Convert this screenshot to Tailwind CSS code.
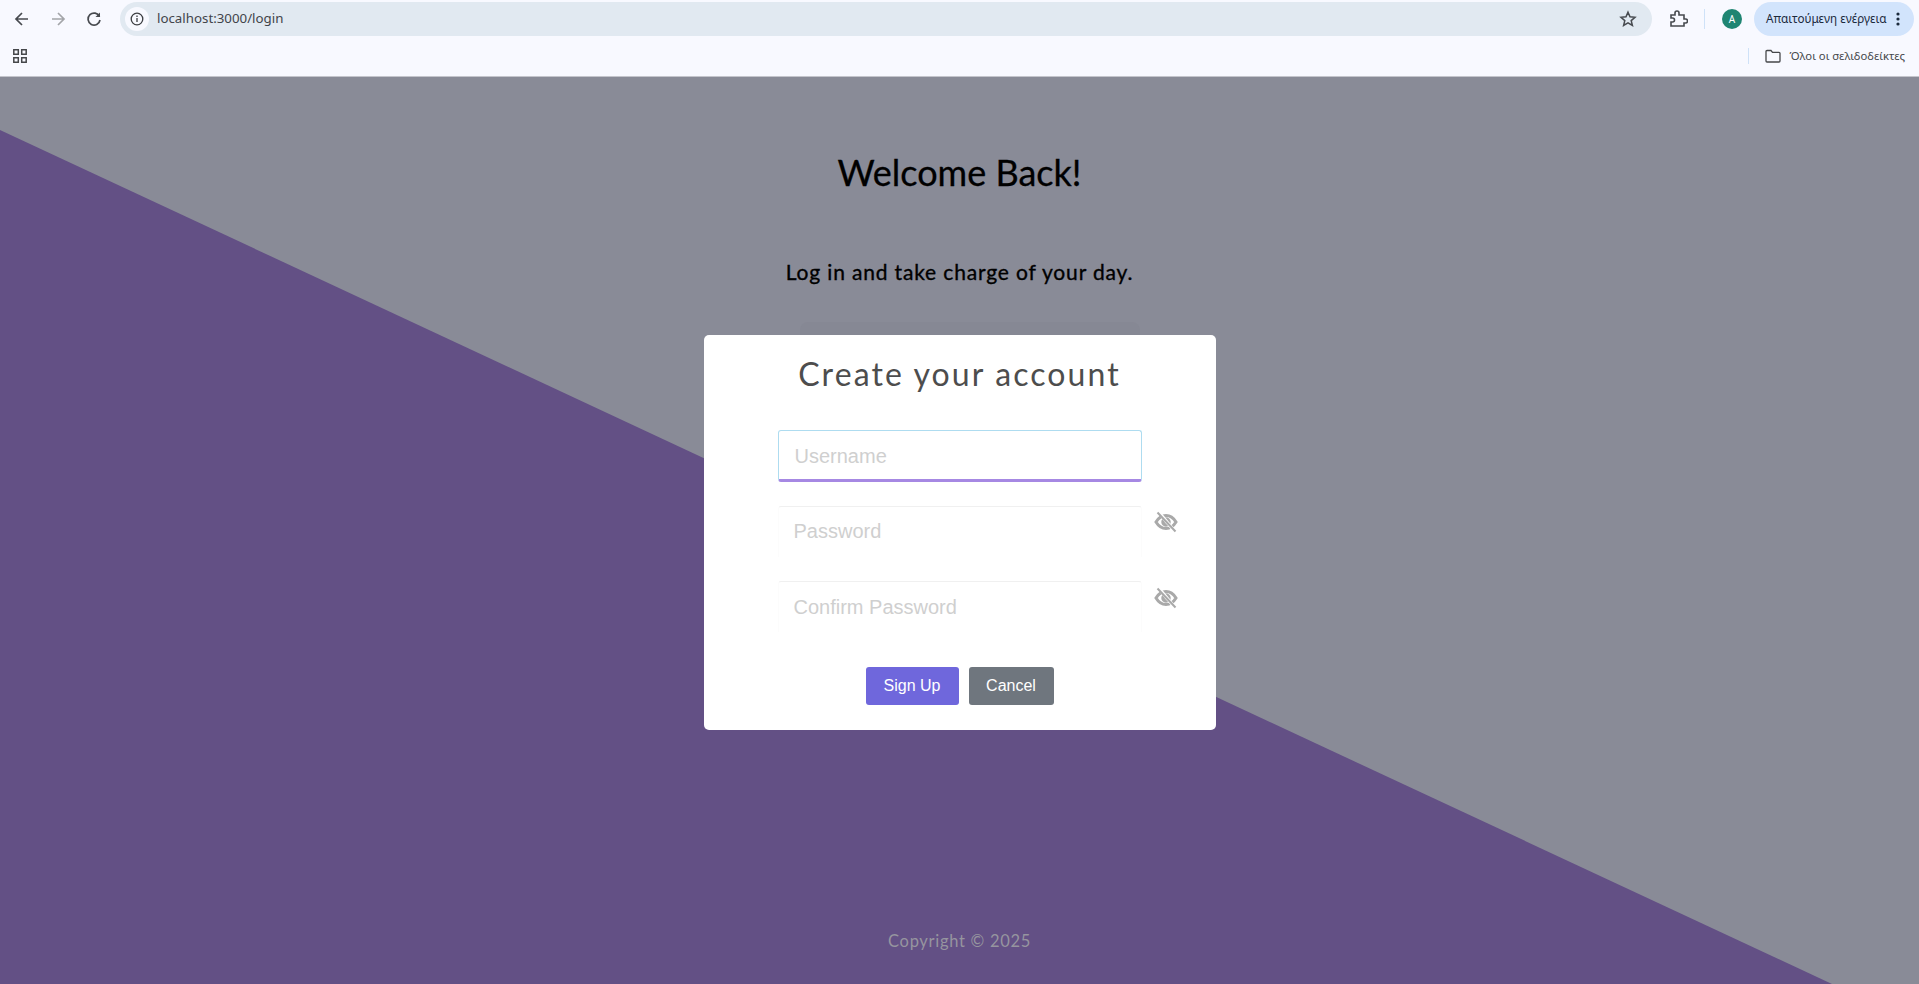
<!DOCTYPE html>
<html>
<head>
<meta charset="utf-8">
<script src="https://cdn.jsdelivr.net/npm/@tailwindcss/browser@4"></script>
</head>
<body class="w-[1919px] h-[984px] overflow-hidden font-['Liberation_Sans',sans-serif]">
<div class="h-[77px] bg-[#f8f9ff] flex flex-col border-b border-[#c4c5cc]">
  <div class="h-[38px] shrink-0 flex items-center pl-[12px] pr-[5px] text-[#45474a]">
    <div class="flex items-center gap-[14px] w-[108px] shrink-0">
      <svg class="w-[20px] h-[20px]" viewBox="0 0 20 20" fill="none" stroke="#474a4f" stroke-width="1.7"><path d="M16 10H4.500M10 4l-6 6 6 6"/></svg>
      <svg class="w-[20px] h-[20px] ml-[2px]" viewBox="0 0 20 20" fill="none" stroke="#a3a5a9" stroke-width="1.7"><path d="M4 10h11.500M10 4l6 6-6 6"/></svg>
      <svg class="w-[20px] h-[20px] ml-[2px]" viewBox="0 0 20 20" fill="none" stroke="#474a4f" stroke-width="1.7"><path d="M15.500 7.500A6 6 0 1 0 16 11"/><path d="M16 3.500V8h-4.500" fill="#474a4f" stroke="none"/></svg>
    </div>
    <div class="w-[1532px] shrink-0 h-[34px] rounded-full bg-[#e1e9f1] flex items-center pl-[5px] pr-[15px]">
      <div class="w-[24px] h-[24px] rounded-full bg-[#f8f9ff] flex items-center justify-center">
        <svg class="w-[14px] h-[14px]" viewBox="0 0 14 14" fill="none" stroke="#3c3e42" stroke-width="1.3"><circle cx="7" cy="7" r="5.800"/><path d="M7 6v4M7 3.500v1.400"/></svg>
      </div>
      <span class="ml-[8px] text-[13.300px] text-[#41444a] font-['Noto_Sans',sans-serif]">localhost:3000/login</span>
      <svg class="w-[18px] h-[18px] ml-auto" viewBox="0 0 18 18" fill="none" stroke="#474a4f" stroke-width="1.5"><path d="M9 2.200l2 4.600 5 .5-3.800 3.300 1.200 4.900L9 12.900l-4.400 2.600 1.200-4.900L2 7.300l5-.5z"/></svg>
    </div>
    <svg class="w-[20px] h-[20px] ml-[16px] shrink-0" viewBox="0 0 20 20" fill="none" stroke="#474a4f" stroke-width="1.6"><path d="M3 6h4V4a2 2 0 0 1 4 0v2h5v4h1.500a2 2 0 0 1 0 4H16v3H3v-4h1.500a2 2 0 0 0 0-4H3z"/></svg>
    <div class="w-px h-[20px] bg-[#cfe2f8] ml-[16px] shrink-0"></div>
    <div class="w-[20px] h-[20px] ml-[17px] shrink-0 rounded-full bg-[#1f8572] text-white text-[10px] flex items-center justify-center font-['Noto_Sans',sans-serif]">A</div>
    <div class="ml-[12px] w-[160px] shrink-0 h-[34px] rounded-full bg-[#d2e4fc] flex items-center pl-[12px] text-[11.700px] text-[#1c2a3c] font-['Noto_Sans',sans-serif]">
      <span class="whitespace-nowrap">Απαιτούμενη ενέργεια</span>
      <svg class="w-[4px] h-[14px] ml-[10px]" viewBox="0 0 4 14" fill="#1c2a3c"><circle cx="2" cy="2" r="1.600"/><circle cx="2" cy="7" r="1.600"/><circle cx="2" cy="12" r="1.600"/></svg>
    </div>
  </div>
  <div class="h-[36px] shrink-0 flex items-center pl-[13px] pr-[14px]">
    <svg class="w-[14px] h-[14px]" viewBox="0 0 14 14" fill="none" stroke="#45474a" stroke-width="1.500"><path d="M.8.8h4.500v4.500H.8zM8.700.8h4.500v4.500H8.700zM.8 8.700h4.500v4.500H.8zM8.700 8.700h4.500v4.500H8.700z"/></svg>
    <div class="w-px h-[16px] bg-[#cfe2f8] ml-auto"></div>
    <svg class="w-[16px] h-[14px] ml-[16px]" viewBox="0 0 16 14" fill="none" stroke="#45474a" stroke-width="1.300"><path d="M1 2.500a1 1 0 0 1 1-1h4l1.500 1.800H14a1 1 0 0 1 1 1V12a1 1 0 0 1-1 1H2a1 1 0 0 1-1-1z"/></svg>
    <span class="ml-[8px] text-[11.300px] text-[#45474a] font-['Noto_Sans',sans-serif] whitespace-nowrap">Όλοι οι σελιδοδείκτες</span>
  </div>
</div>
<main class="relative h-[907px] bg-[#898b97] overflow-hidden flex flex-col items-center">
  <svg class="absolute inset-0 w-[1919px] h-[907px]" viewBox="0 0 1919 907"><polygon points="0,53 1832,907 0,907" fill="#635085"/></svg>
  <h1 class="relative mt-[73px] text-[36px] leading-[44px] text-black font-['Lato',sans-serif] [-webkit-text-stroke:0.3px_black]">Welcome Back!</h1>
  <p class="relative mt-[64px] text-[21px] leading-[28px] text-black font-['Lato',sans-serif] tracking-[0.840px] [-webkit-text-stroke:0.35px_black]">Log in and take charge of your day.</p>
  <div class="relative mt-[49px] w-[512px] h-[395px] bg-white rounded-[5px] flex flex-col items-center">
    <div class="absolute top-[-13px] left-[96px] w-[340px] h-[13px] rounded-t-[8px] bg-[#868894]"></div>
    <h2 class="mt-[19px] text-[32px] leading-[40px] text-[#4d4d4d] font-['Lato',sans-serif] tracking-[2.100px]">Create your account</h2>
    <div class="mt-[36px] w-[364px] h-[52px] rounded-[3px] border border-[#aedcf0] border-b-[3px] border-b-[#a688e3] pl-[16px] pt-[1px] flex items-center text-[20px] text-[#cfcfcf]">Username</div>
    <div class="relative mt-[24px] w-[364px] h-[51px] rounded-t-[3px] border border-b-0 border-x-[#fcfcfc] border-t-[#f0f0f0] pl-[15px] pt-[12px] text-[20px] leading-[24px] text-[#cfcfcf]">Password
      <svg class="absolute right-[-37px] top-[3px] w-[24px] h-[24px]" viewBox="0 0 24 24" fill="none" stroke="#a9a9a9"><path d="M2 12c3-5 6.500-6.500 10-6.500S19 7 22 12c-3 5-6.500 6.500-10 6.500S5 17 2 12z" stroke-width="3"/><circle cx="12" cy="12" r="3" stroke-width="3.500"/><path d="M5 2.500l15 18" stroke="#ffffff" stroke-width="3.500"/><path d="M3.500 2.500l18 19" stroke-width="2"/></svg>
    </div>
    <div class="relative mt-[24px] w-[364px] h-[51px] rounded-t-[3px] border border-b-0 border-x-[#fcfcfc] border-t-[#f0f0f0] pl-[15px] pt-[13px] text-[20px] leading-[24px] text-[#cfcfcf]">Confirm Password
      <svg class="absolute right-[-37px] top-[4px] w-[24px] h-[24px]" viewBox="0 0 24 24" fill="none" stroke="#a9a9a9"><path d="M2 12c3-5 6.500-6.500 10-6.500S19 7 22 12c-3 5-6.500 6.500-10 6.500S5 17 2 12z" stroke-width="3"/><circle cx="12" cy="12" r="3" stroke-width="3.500"/><path d="M5 2.500l15 18" stroke="#ffffff" stroke-width="3.500"/><path d="M3.500 2.500l18 19" stroke-width="2"/></svg>
    </div>
    <div class="mt-[35px] flex gap-[10px]">
      <div class="w-[93px] h-[38px] rounded-[3px] bg-[#6f67dc] text-white text-[16px] flex items-center justify-center">Sign Up</div>
      <div class="w-[85px] h-[38px] rounded-[3px] bg-[#6f767e] text-white text-[16px] flex items-center justify-center">Cancel</div>
    </div>
  </div>
  <p class="absolute top-[852px] text-[16.500px] leading-[24px] text-[#96959f] font-['Lato',sans-serif] tracking-[0.700px]">Copyright © 2025</p>
</main>
</body>
</html>
